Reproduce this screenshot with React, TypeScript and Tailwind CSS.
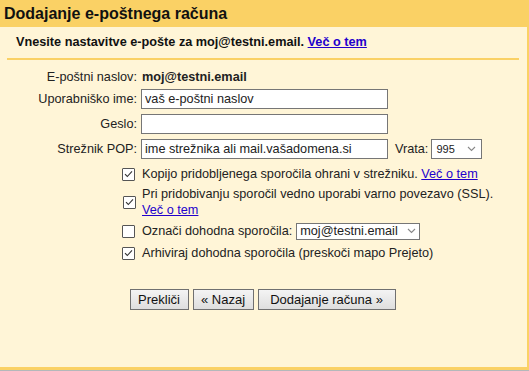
import React from "react";

const FONT = "font-['Liberation_Sans',Arial,sans-serif]";

function Check({ checked }: { checked?: boolean }) {
  return (
    <span className="flex h-[13px] w-[13px] shrink-0 items-center justify-center rounded-[1px] border border-[#555] bg-white">
      {checked && (
        <svg width="9" height="8" viewBox="0 0 9 8" fill="none">
          <path d="M1 4.2l2.3 2.3L8 1.3" stroke="#333" strokeWidth="1.1" />
        </svg>
      )}
    </span>
  );
}

function Chevron() {
  return (
    <svg width="9" height="6" viewBox="0 0 9 6" fill="none">
      <path d="M1 1l3.5 3.5L8 1" stroke="#888" strokeWidth="1.1" />
    </svg>
  );
}

const Link = ({ children }: { children: React.ReactNode }) => (
  <a href="#" className="text-[#2200cc] underline">
    {children}
  </a>
);

export default function App() {
  return (
    <div className={`w-[529px] h-[371px] bg-[#fad165] text-[12.7px] leading-[16px] text-[#222] ${FONT}`}>
      <h1 className="h-[27px] pl-[4px] pt-[4px] text-[16px] font-bold leading-[19px] text-[#111]">
        Dodajanje e-poštnega računa
      </h1>
      <div className="mr-[2px] h-[340px] bg-[#fff5d7]">
        <div className="mx-[7px] mr-[8px] h-[33px] border-b-2 border-[#fad165] pl-[9px] pt-[7px] font-bold text-[#111]">
          Vnesite nastavitve e-pošte za moj@testni.email. <Link>Več o tem</Link>
        </div>

        <div className="grid grid-cols-[137px_1fr] gap-x-[4px] pt-[9px]">
          <div className="text-right">E-poštni naslov:</div>
          <div className="pl-[1px] font-bold">moj@testni.email</div>

          <div className="mt-[4px] flex h-[20px] items-center justify-end">Uporabniško ime:</div>
          <div className="mt-[4px]">
            <input
              defaultValue="vaš e-poštni naslov"
              className="h-[20px] w-[247px] border border-[#767676] bg-white px-[3px] text-[12.7px] text-[#222] outline-none"
            />
          </div>

          <div className="mt-[5px] flex h-[20px] items-center justify-end">Geslo:</div>
          <div className="mt-[5px]">
            <input
              type="password"
              className="h-[20px] w-[247px] border border-[#767676] bg-white px-[3px] text-[12.7px] outline-none"
            />
          </div>

          <div className="mt-[5px] flex h-[20px] items-center justify-end">Strežnik POP:</div>
          <div className="mt-[5px] flex items-center">
            <input
              defaultValue="ime strežnika ali mail.vašadomena.si"
              className="h-[20px] w-[247px] border border-[#767676] bg-white px-[3px] text-[12.7px] text-[#222] outline-none"
            />
            <span className="ml-[7px]">Vrata:</span>
            <span className="ml-[3px] flex h-[20px] w-[51px] items-center justify-between border border-[#767676] bg-white pl-[4px] pr-[5px] text-[11px]">
              995
              <Chevron />
            </span>
          </div>
        </div>

        <div className="flex flex-col pl-[122px]">
          <div className="mt-[7px] flex items-center gap-[7px]">
            <Check checked />
            <span>
              Kopijo pridobljenega sporočila ohrani v strežniku. <Link>Več o tem</Link>
            </span>
          </div>
          <div className="mt-[4px] flex items-center gap-[6px] pl-[1px]">
            <Check checked />
            <span>
              Pri pridobivanju sporočil vedno uporabi varno povezavo (SSL).
              <br />
              <Link>Več o tem</Link>
            </span>
          </div>
          <div className="mt-[4px] flex h-[18px] items-center gap-[7px]">
            <Check />
            <span>Označi dohodna sporočila:</span>
            <span className="-ml-[3px] flex h-[17px] w-[124px] items-center justify-between border border-[#767676] bg-white pl-[3px] pr-[3px]">
              moj@testni.email
              <Chevron />
            </span>
          </div>
          <div className="mt-[5px] flex items-center gap-[7px]">
            <Check checked />
            <span>Arhiviraj dohodna sporočila (preskoči mapo Prejeto)</span>
          </div>
        </div>

        <div className="mt-[28px] flex justify-center gap-[4px] pr-[2px]">
          <button className="h-[21px] w-[59px] border border-[#707070] bg-gradient-to-b from-[#f4f4f4] to-[#dedede] text-[13px] text-[#111]">
            Prekliči
          </button>
          <button className="h-[21px] w-[61px] border border-[#707070] bg-gradient-to-b from-[#f4f4f4] to-[#dedede] text-[13px] text-[#111]">
            « Nazaj
          </button>
          <button className="h-[21px] w-[138px] border border-[#707070] bg-gradient-to-b from-[#f4f4f4] to-[#dedede] text-[13px] text-[#111]">
            Dodajanje računa »
          </button>
        </div>
      </div>
      <div className="mt-[3px] h-[1px] bg-[#b4b8bb]" />
    </div>
  );
}
